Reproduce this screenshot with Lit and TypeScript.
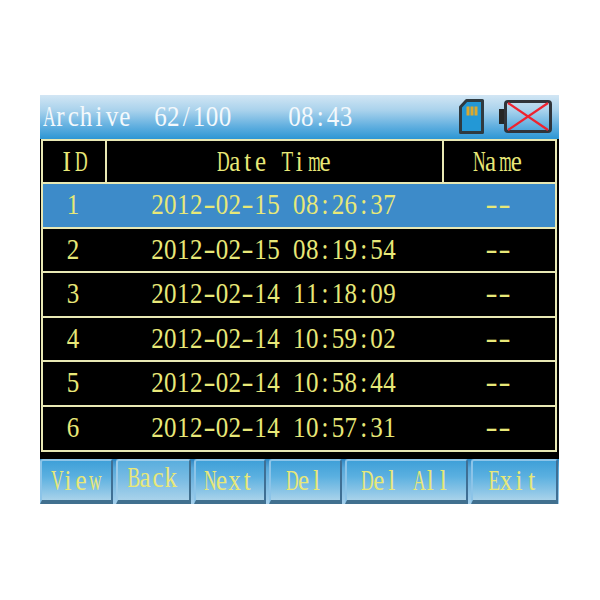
import { LitElement, html, css } from "lit";
import { customElement } from "lit/decorators.js";

const ROWS = [
  ["1", "2012-02-15 08:26:37"],
  ["2", "2012-02-15 08:19:54"],
  ["3", "2012-02-14 11:18:09"],
  ["4", "2012-02-14 10:59:02"],
  ["5", "2012-02-14 10:58:44"],
  ["6", "2012-02-14 10:57:31"],
];
const BUTTONS = ["View", "Back", "Next", "Del", "Del All", "Exit"];

/* The device font is a fixed-pitch serif: each character sits in its own 12.9px cell. */
function cellClass(ch: string) {
  if (ch === "-") return "c long";
  if (ch === "m") return "c narrowest";
  if ("wADNV".includes(ch)) return "c narrower";
  if ("TEB".includes(ch)) return "c wide";
  return "c";
}
function mono(text: string) {
  return html`<span class="t">${[...text].map(
    (ch) => html`<span class=${cellClass(ch)}>${ch}</span>`
  )}</span>`;
}

@customElement("app-root")
export class AppRoot extends LitElement {
  static styles = css`
    :host {
      display: block;
      height: 600px;
      padding: 95px 0 0 40px;
      box-sizing: border-box;
      background: #fff;
      font-family: "Liberation Serif", serif;
      font-size: 25px;
      color: #e8e878;
    }
    .screen {
      width: 519px;
      height: 409px;
      display: flex;
      flex-direction: column;
      background: #000;
    }
    .t {
      display: inline-flex;
      transform: scaleY(1.16);
      white-space: pre;
      line-height: 20px;
    }
    .c {
      display: inline-block;
      width: 12.9px;
      text-align: center;
    }
    .c.long { transform: scaleX(1.45); }
    .c.wide { transform: scaleX(0.76); }
    .c.narrower { transform: scaleX(0.7); }
    .c.narrowest { transform: scaleX(0.64); }
    .header {
      height: 44px;
      flex: none;
      display: flex;
      align-items: center;
      color: #f4f9fc;
      background: linear-gradient(#d2e6f4 0%, #a9d2ec 35%, #63b0e0 70%, #2c96d4 100%);
      box-sizing: border-box;
      padding: 0 7px 1px 1px;
    }
    .header .title { width: 113px; }
    .header .count { width: 134px; }
    .icons {
      margin-left: auto;
      display: flex;
      align-items: center;
      gap: 15px;
    }
    .icons svg { display: block; }
    .table {
      flex: none;
      width: 516px;
      margin-left: 1px;
      box-sizing: border-box;
      border: 2px solid #e8e8b4;
    }
    .row {
      display: grid;
      grid-template-columns: 62px 337px 1fr;
      height: 44.5px;
      box-sizing: border-box;
      border-bottom: 2px solid #e8e8b4;
      align-items: center;
      text-align: center;
    }
    .row:last-child { border-bottom: none; height: 43px; }
    .row.head { height: 43px; }
    .row.head .cell {
      height: 100%;
      display: flex;
      align-items: center;
      justify-content: center;
      box-sizing: border-box;
    }
    .row.head .cell:first-child { padding-right: 2px; }
    .row.head .cell + .cell { border-left: 2px solid #e8e8b4; }
    .row.head .cell:nth-child(2) { padding-right: 2px; }
    .row.head .cell:last-child { padding-right: 5px; }
    .row.sel { background: #3d8bc9; }
    .row .id { padding-right: 2px; }
    .row .dash { padding-right: 2px; }
    .spacer { height: 7px; flex: none; }
    .buttons {
      flex: 1;
      display: grid;
      grid-template-columns: 73px 75px 72px 73px 123px 87px;
      column-gap: 3px;
      background: linear-gradient(#2f86c2 0%, #57a9db 20%, #a5d0ec 100%);
    }
    .btn {
      display: flex;
      align-items: center;
      justify-content: center;
      box-sizing: border-box;
      padding: 2px 4px 0 0;
      border-radius: 3px 3px 0 0;
      border-left: 2px solid #8cc4e8;
      border-top: 2px solid #8cc4e8;
      border-right: 2px solid #3f6f94;
      border-bottom: 4px solid #41708f;
      background: linear-gradient(#3fa0d8 0%, #5bb0e0 40%, #a8d2ea 100%);
    }
    .btn.pressed {
      padding: 0 4px 4px 0;
      background: linear-gradient(#5aaede 0%, #7cbde4 50%, #a8d2ea 100%);
      border-color: #9ccbe9;
      border-bottom-color: #41708f;
      border-right-color: #41708f;
    }
  `;

  render() {
    return html`
      <div class="screen">
        <div class="header">
          <span class="title">${mono("Archive")}</span>
          <span class="count">${mono("62/100")}</span>
          <span>${mono("08:43")}</span>
          <div class="icons">
            <svg width="25" height="35" viewBox="0 0 25 35">
              <path d="M7.5 1.5 H23.5 V33.5 H1.5 V8 Z" fill="#2398d6" stroke="#2f3a40" stroke-width="3" stroke-linejoin="round" />
              <rect x="7.5" y="7.5" width="3" height="9" fill="#dba92e" />
              <rect x="11.5" y="7.5" width="3" height="9" fill="#dba92e" />
              <rect x="15.5" y="7.5" width="3" height="9" fill="#dba92e" />
            </svg>
            <svg width="53" height="34" viewBox="0 0 53 34">
              <rect x="0" y="9" width="6" height="15" fill="#262626" />
              <rect x="6.5" y="1.5" width="45" height="30" rx="2.5" fill="none" stroke="#30343a" stroke-width="3" />
              <path d="M9 3 L49 30 M49 3 L9 30" stroke="#ee2330" stroke-width="2.2" fill="none" />
            </svg>
          </div>
        </div>
        <div class="table">
          <div class="row head">
            <div class="cell">${mono("ID")}</div>
            <div class="cell">${mono("Date Time")}</div>
            <div class="cell">${mono("Name")}</div>
          </div>
          ${ROWS.map(
            ([id, date], i) => html`
              <div class="row ${i === 0 ? "sel" : ""}">
                <div class="id">${mono(id)}</div>
                <div>${mono(date)}</div>
                <div class="dash">${mono("--")}</div>
              </div>
            `
          )}
        </div>
        <div class="spacer"></div>
        <div class="buttons">
          ${BUTTONS.map(
            (b) => html`<div class="btn ${b === "Back" ? "pressed" : ""}">${mono(b)}</div>`
          )}
        </div>
      </div>
    `;
  }
}
